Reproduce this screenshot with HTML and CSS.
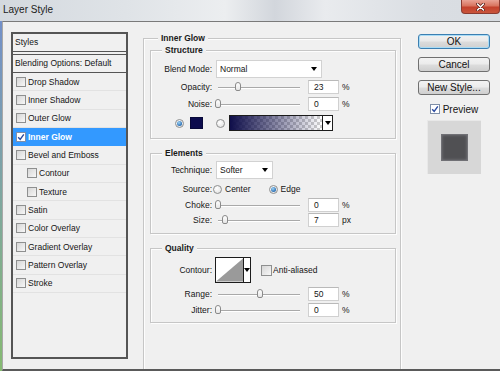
FILE: index.html
```html
<!DOCTYPE html>
<html>
<head>
<meta charset="utf-8">
<title>Layer Style</title>
<link rel="stylesheet" href="styles.css">
</head>
<body>
<div class="window">
  <div class="titlebar">
    <span class="title">Layer Style</span>
    <span class="close">
      <svg width="9" height="8" viewBox="0 0 9 8"><path d="M1.5 1 L7.5 7 M7.5 1 L1.5 7" stroke="#5a1a12" stroke-width="3" stroke-linecap="round"/><path d="M1.5 1 L7.5 7 M7.5 1 L1.5 7" stroke="#fff" stroke-width="1.6" stroke-linecap="round"/></svg>
    </span>
  </div>
  <div class="client">
    <div class="edge"></div>
    <div class="frame">
      <div class="styles-panel">
        <div class="sp-head">Styles</div>
        <div class="sp-blend">Blending Options: Default</div>
        <ul class="sp-list">
          <li><span class="cb"></span>Drop Shadow</li>
          <li><span class="cb"></span>Inner Shadow</li>
          <li><span class="cb"></span>Outer Glow</li>
          <li class="sel"><span class="cb on"><svg width="8" height="8" viewBox="0 0 8 8"><path d="M1.2 4.2 L3.2 6.4 L6.8 1.4" fill="none" stroke="#2a4aa0" stroke-width="1.4"/></svg></span>Inner Glow</li>
          <li><span class="cb"></span>Bevel and Emboss</li>
          <li class="sub"><span class="cb"></span>Contour</li>
          <li class="sub"><span class="cb"></span>Texture</li>
          <li><span class="cb"></span>Satin</li>
          <li><span class="cb"></span>Color Overlay</li>
          <li><span class="cb"></span>Gradient Overlay</li>
          <li><span class="cb"></span>Pattern Overlay</li>
          <li><span class="cb"></span>Stroke</li>
        </ul>
      </div>

      <div class="middle">
        <div class="group outer">
          <div class="gtitle outer-title">Inner Glow</div>

          <div class="group structure">
            <div class="gtitle">Structure</div>
            <div class="row r-select m4">
              <span class="lbl">Blend Mode:</span>
              <div class="select w-blend"><span>Normal</span><i class="arrow"></i></div>
            </div>
            <div class="row r-slider m2">
              <span class="lbl">Opacity:</span>
              <div class="slider"><span class="thumb" style="left:20px"></span></div>
              <span class="num">23</span><span class="unit">%</span>
            </div>
            <div class="row r-slider m3">
              <span class="lbl">Noise:</span>
              <div class="slider"><span class="thumb" style="left:0px"></span></div>
              <span class="num">0</span><span class="unit">%</span>
            </div>
            <div class="row r-color m4">
              <span class="radio on"></span>
              <span class="swatch"></span>
              <span class="radio r2"></span>
              <div class="gradbox"><span class="grad"></span><span class="gradarrow"><i class="arrow"></i></span></div>
            </div>
          </div>

          <div class="group elements">
            <div class="gtitle">Elements</div>
            <div class="row r-select m2">
              <span class="lbl">Technique:</span>
              <div class="select w-tech"><span>Softer</span><i class="arrow"></i></div>
            </div>
            <div class="row r-source m2">
              <span class="lbl lbl-tight">Source:</span>
              <span class="radio"></span><span class="opt">Center</span>
              <span class="radio on r-edge"></span><span class="opt">Edge</span>
            </div>
            <div class="row r-slider m1">
              <span class="lbl">Choke:</span>
              <div class="slider"><span class="thumb" style="left:0px"></span></div>
              <span class="num">0</span><span class="unit">%</span>
            </div>
            <div class="row r-slider m1">
              <span class="lbl">Size:</span>
              <div class="slider"><span class="thumb" style="left:7px"></span></div>
              <span class="num">7</span><span class="unit">px</span>
            </div>
          </div>

          <div class="group quality">
            <div class="gtitle">Quality</div>
            <div class="row r-contour m3">
              <span class="lbl">Contour:</span>
              <div class="contour">
                <svg class="curve" width="28" height="24" viewBox="0 0 28 24"><rect width="28" height="24" fill="#fff"/><polygon points="0,24 28,0 28,24" fill="#9a9a9a"/></svg>
                <span class="carrow"><i class="arrow"></i></span>
              </div>
              <span class="cb aa"></span><span class="opt">Anti-aliased</span>
            </div>
            <div class="row r-slider m4">
              <span class="lbl">Range:</span>
              <div class="slider"><span class="thumb" style="left:42px"></span></div>
              <span class="num">50</span><span class="unit">%</span>
            </div>
            <div class="row r-slider m2">
              <span class="lbl">Jitter:</span>
              <div class="slider"><span class="thumb" style="left:0px"></span></div>
              <span class="num">0</span><span class="unit">%</span>
            </div>
          </div>
        </div>
      </div>

      <div class="actions">
        <div class="btn ok">OK</div>
        <div class="btn">Cancel</div>
        <div class="btn">New Style...</div>
        <div class="preview-row">
          <span class="cb on"><svg width="8" height="8" viewBox="0 0 8 8"><path d="M1.2 4.2 L3.2 6.4 L6.8 1.4" fill="none" stroke="#2a4aa0" stroke-width="1.4"/></svg></span>
          <span>Preview</span>
        </div>
        <div class="preview-box"><div class="preview-square"></div></div>
      </div>
    </div>
  </div>
</div>
</body>
</html>
```

FILE: styles.css
```css
* { box-sizing: border-box; margin: 0; padding: 0; }
html, body { width: 500px; height: 371px; overflow: hidden; }
body {
  font-family: "Liberation Sans", Arial, sans-serif;
  font-size: 8.5px;
  color: #151515;
  background: #f0f0f0;
}
.window { width: 500px; height: 371px; display: flex; flex-direction: column; }

.titlebar {
  height: 21px; flex: none;
  display: flex; justify-content: space-between; align-items: flex-start;
  background: linear-gradient(90deg, #d4d9df 0%, #dfe3e7 25%, #eceef0 45%, #d2d6dc 55%, #e9ebee 65%, #dadee3 85%, #d8dce1 100%);
}
.title { font-size: 10px; padding: 4px 0 0 3px; color: #1c1c1c; }
.close {
  width: 39px; height: 14px; margin-right: 0;
  display: flex; align-items: center; justify-content: center;
  border: 1px solid #8a3b31; border-top: none;
  border-radius: 0 0 4px 4px;
  background: linear-gradient(#e9a395 0%, #d8745f 45%, #c4412c 55%, #c9553c 100%);
}

.client { flex: 1; display: flex; min-height: 0; }
.edge { width: 2px; flex: none; background: linear-gradient(#7390c9, #7fa7a0 50%, #86ba72); }
.frame {
  flex: 1; display: flex; align-items: flex-start;
  border-top: 1px solid #7a7a7a; border-left: 1px solid #a8a8a8; border-bottom: 2px solid #5a5a5a;
  padding: 10px 0 0 8px; overflow: hidden; background: #f0f0f0;
}

/* Styles list panel */
.styles-panel {
  width: 117px; height: 327px; flex: none;
  border: 2px solid #555;
  background: #f0f0f0;
}
.sp-head { height: 18px; line-height: 17px; padding-left: 2px; border-bottom: 1px solid #555; }
.sp-blend { margin-top: 2px; height: 19px; line-height: 17px; padding-left: 2px; border-top: 1px solid #555; border-bottom: 1px solid #555; }
.sp-list { list-style: none; }
.sp-list li {
  height: 18.33px; display: flex; align-items: center;
  padding-left: 3px; border-bottom: 1px solid #e2e2e2;
  white-space: nowrap;
}
.sp-list li.sub { padding-left: 14px; }
.sp-list li.sel { background: #3399ff; color: #fff; font-weight: bold; border-bottom-color: #3399ff; }
.cb {
  width: 10px; height: 10px; flex: none; margin-right: 2px;
  border: 1px solid #8e8f8f;
  background: linear-gradient(135deg, #d6d6d6, #f7f7f7);
  display: inline-flex; align-items: center; justify-content: center;
}
.cb.on { background: #fff; border-color: #7f8fa8; }

/* Middle */
.middle { margin-left: 15px; width: 258px; flex: none; }
.group {
  border: 1px solid #c6c6c6;
  box-shadow: inset 1px 1px 0 #fdfdfd, 1px 1px 0 #fdfdfd;
}
.gtitle {
  font-weight: bold; line-height: 11px; height: 11px;
  margin: -6px 0 0 11px; padding: 0 3px; width: max-content;
  background: #f0f0f0; color: #1a1a1a;
}
.outer { margin-top: 6px; height: 340px; padding: 0 4px 0 6px; }
.outer .outer-title { margin-left: 8px; }
.structure { margin-top: 6px; padding-bottom: 7px; }
.elements { margin-top: 14px; padding-bottom: 6px; }
.quality { margin-top: 14px; padding-bottom: 5px; }

.row { display: flex; align-items: center; }
.m1 { margin-top: 1px; } .m2 { margin-top: 2px; } .m3 { margin-top: 3px; } .m4 { margin-top: 4px; }
.r-select { height: 18px; }
.r-slider { height: 14px; }
.r-color { height: 16px; }
.r-source { height: 16px; }
.r-contour { height: 26px; }
.lbl { width: 61px; text-align: right; margin-right: 3px; flex: none; white-space: nowrap; }
.lbl-tight { margin-right: 1px; }

.select {
  height: 18px; margin-left: 1px;
  display: flex; align-items: center; justify-content: space-between;
  padding: 0 4px 0 3px;
  background: #fff; border: 1px solid #d2d2d2;
}
.w-blend { width: 106px; }
.w-tech { width: 57px; }
.arrow {
  display: block; width: 0; height: 0;
  border-left: 3px solid transparent; border-right: 3px solid transparent;
  border-top: 4px solid #000;
}

.slider { position: relative; width: 88px; height: 14px; flex: none; }
.slider::before {
  content: ""; position: absolute; left: 3px; right: 3px; top: 7px; height: 1px;
  background: #a9a9a9; box-shadow: 0 1px 0 #fff;
}
.thumb {
  position: absolute; top: 2px; width: 6px; height: 9px;
  border: 1px solid #8a8a8a; border-radius: 3px 3px 2px 2px;
  background: linear-gradient(#ffffff, #e6e6e6);
}
.num {
  width: 31px; height: 14px; margin-left: 5px; flex: none;
  padding-left: 5px; line-height: 13px;
  background: #fff; border: 1px solid #d0d0d0; border-top-color: #b9b9b9;
}
.unit { margin-left: 3px; }

.radio {
  width: 9px; height: 9px; border-radius: 50%; flex: none;
  border: 1px solid #8e8f8f;
  background: radial-gradient(circle at 40% 35%, #ffffff, #dcdcdc);
  display: inline-flex; align-items: center; justify-content: center;
}
.radio.on::after {
  content: ""; width: 5px; height: 5px; border-radius: 50%;
  background: radial-gradient(circle at 40% 35%, #9fd4f5, #2a6eb4 70%, #1d4f8a);
}
.r-color .radio { margin-left: 24px; }
.swatch { width: 13px; height: 12px; margin-left: 6px; background: #0c0b4d; border: 1px solid #080838; }
.r-color .radio.r2 { margin-left: 13px; }
.gradbox {
  width: 104px; height: 16px; margin-left: 4px; display: flex;
  border: 1px solid #1c1c1c; background: #fff;
}
.grad {
  flex: 1;
  background-image:
    linear-gradient(90deg, #0f0e4a 0%, rgba(15,14,74,0.55) 45%, rgba(15,14,74,0) 100%),
    linear-gradient(45deg, #cfcfcf 25%, transparent 25%, transparent 75%, #cfcfcf 75%),
    linear-gradient(45deg, #cfcfcf 25%, transparent 25%, transparent 75%, #cfcfcf 75%);
  background-size: 100% 100%, 6px 6px, 6px 6px;
  background-position: 0 0, 0 0, 3px 3px;
  background-color: #fff;
}
.gradarrow { width: 10px; border-left: 1px solid #1c1c1c; display: flex; align-items: center; justify-content: center; }

.r-source .opt { margin-left: 3px; }
.r-source .r-edge { margin-left: 18px; }

.contour {
  width: 36px; height: 26px; display: flex; flex: none;
  border: 1px solid #1c1c1c; background: #fff;
}
.curve { display: block; }
.carrow { flex: 1; border-left: 1px solid #1c1c1c; display: flex; align-items: center; justify-content: center; }
.cb.aa { margin-left: 10px; margin-right: 1px; width: 11px; height: 11px; }

/* Right column */
.actions { margin-left: 17px; width: 72px; flex: none; padding-top: 2px; display: flex; flex-direction: column; align-items: center; }
.btn {
  width: 72px; height: 15px; margin-bottom: 8px;
  font-size: 10px; line-height: 13px; text-align: center; color: #111;
  border: 1px solid #707070; border-radius: 3px;
  background: linear-gradient(#f3f3f3 0%, #ebebeb 48%, #dddddd 52%, #cfcfcf 100%);
}
.btn.ok {
  border-color: #3c7fb1;
  box-shadow: inset 0 0 0 1px #a9dcf6;
  background: linear-gradient(#f1f1f1 0%, #e9e9e9 48%, #dcdcdc 52%, #d0d0d0 100%);
}
.preview-row { display: flex; align-items: center; gap: 3px; height: 12px; font-size: 10px; margin-top: 0px; }
.preview-row .cb { margin-right: 0; }
.preview-box {
  width: 54px; height: 54px; margin-top: 5px;
  background: #d7d7d7; box-shadow: inset 1px 1px 0 #e8e8e8;
  display: flex; align-items: center; justify-content: center;
}
.preview-square {
  width: 27px; height: 27px;
  background: #505053; border: 1px solid #707075;
  box-shadow: inset 0 0 3px #7a7a80;
}
```
